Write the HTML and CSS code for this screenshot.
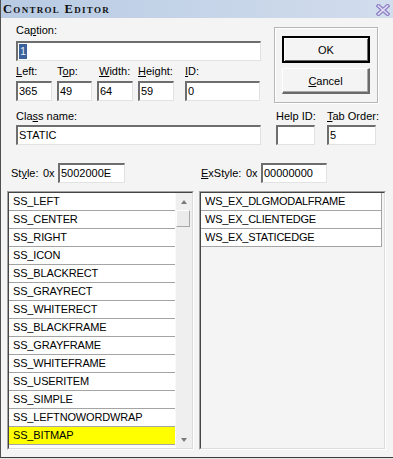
FILE: index.html
```html
<!DOCTYPE html>
<html>
<head>
<meta charset="utf-8">
<link rel="stylesheet" href="styles.css">
</head>
<body>
<div class="window">
  <div class="titlebar">
    <span class="title">Control Editor</span>
    <svg class="close" width="14" height="12" viewBox="0 0 14 12">
      <path d="M2.5 2 L11.5 10 M11.5 2 L2.5 10" stroke="#8d80c4" stroke-width="4" stroke-linecap="square"/>
      <path d="M2.5 2 L11.5 10 M11.5 2 L2.5 10" stroke="#e2dcf5" stroke-width="1.6" stroke-linecap="square"/>
    </svg>
  </div>

  <div class="top">
    <div class="leftcol">
      <div class="label">Ca<u>p</u>tion:</div>
      <div class="field caption"><span class="sel">1</span></div>
      <div class="fields">
        <div class="fld w-left"><div class="label"><u>L</u>eft:</div><div class="field">365</div></div>
        <div class="fld w-top"><div class="label">T<u>o</u>p:</div><div class="field">49</div></div>
        <div class="fld w-width"><div class="label lbl-shift"><u>W</u>idth:</div><div class="field">64</div></div>
        <div class="fld w-height"><div class="label"><u>H</u>eight:</div><div class="field">59</div></div>
        <div class="fld w-id"><div class="label"><u>I</u>D:</div><div class="field">0</div></div>
      </div>
    </div>
    <div class="group">
      <button class="btn default">OK</button>
      <button class="btn"><u>C</u>ancel</button>
    </div>
  </div>

  <div class="classrow">
    <div class="fld w-class"><div class="label">Cla<u>s</u>s name:</div><div class="field">STATIC</div></div>
    <div class="fld w-help"><div class="label">Help ID:</div><div class="field"></div></div>
    <div class="fld w-tab"><div class="label"><u>T</u>ab Order:</div><div class="field">5</div></div>
  </div>

  <div class="stylerow">
    <div class="stylegrp">
      <span class="slabel">St<u>y</u>le:</span><span class="ox">0x</span><div class="field w-style">5002000E</div>
    </div>
    <div class="stylegrp ex">
      <span class="slabel exlabel"><u>E</u>xStyle:</span><span class="ox">0x</span><div class="field w-exstyle">00000000</div>
    </div>
  </div>

  <div class="lists">
    <div class="listbox">
      <div class="listinner">
        <div class="items">
          <div class="row">SS_LEFT</div>
          <div class="row">SS_CENTER</div>
          <div class="row">SS_RIGHT</div>
          <div class="row">SS_ICON</div>
          <div class="row">SS_BLACKRECT</div>
          <div class="row">SS_GRAYRECT</div>
          <div class="row">SS_WHITERECT</div>
          <div class="row">SS_BLACKFRAME</div>
          <div class="row">SS_GRAYFRAME</div>
          <div class="row">SS_WHITEFRAME</div>
          <div class="row">SS_USERITEM</div>
          <div class="row">SS_SIMPLE</div>
          <div class="row">SS_LEFTNOWORDWRAP</div>
          <div class="row hl">SS_BITMAP</div>
          <div class="row">SS_OWNERDRAW</div>
        </div>
        <div class="scrollbar">
          <div class="sbtn"><span class="arrow up"></span></div>
          <div class="track"><div class="thumb"></div></div>
          <div class="sbtn"><span class="arrow down"></span></div>
        </div>
      </div>
    </div>
    <div class="listbox">
      <div class="listinner ex">
        <div class="items exitems">
          <div class="row">WS_EX_DLGMODALFRAME</div>
          <div class="row">WS_EX_CLIENTEDGE</div>
          <div class="row">WS_EX_STATICEDGE</div>
        </div>
      </div>
    </div>
  </div>
</div>
</body>
</html>
```

FILE: styles.css
```css
html, body {
  margin: 0;
  padding: 0;
  background: #e6e6e6;
}
body {
  width: 393px;
  height: 459px;
  overflow: hidden;
  font-family: "Liberation Sans", Arial, sans-serif;
  font-size: 11px;
  color: #000;
}
u { text-decoration: underline; text-underline-offset: 1px; }

.window {
  width: 393px;
  height: 458px;
  box-sizing: border-box;
  background: #f4f4f4;
  border-left: 1px solid #505050;
  border-bottom: 1px solid #3a3a3a;
  display: flex;
  flex-direction: column;
}

.titlebar {
  height: 18px;
  flex: none;
  display: flex;
  align-items: center;
  justify-content: space-between;
  background: linear-gradient(to right, #b8cbe3, #d2dded);
  padding: 0 2px 0 2px;
}
.title {
  font-family: "Liberation Serif", "Times New Roman", serif;
  font-weight: bold;
  font-variant: small-caps;
  font-size: 12.5px;
  letter-spacing: 1.3px;
  color: #111;
  padding-top: 1px;
}
.close { display: block; margin-right: 1px; margin-top: 1px; }

.label {
  height: 13px;
  line-height: 13px;
  white-space: nowrap;
}
.lbl-shift { padding-left: 2px; }

.field {
  height: 20px;
  box-sizing: border-box;
  background: #fff;
  border-style: solid;
  border-width: 2px 1px 1px 2px;
  border-color: #6e6e6e #e2e2e2 #e2e2e2 #6e6e6e;
  padding: 0 0 0 1px;
  line-height: 17px;
  white-space: nowrap;
  overflow: hidden;
}

.top {
  display: flex;
  padding-left: 15px;
  flex: none;
}
.leftcol {
  width: 245px;
  padding-top: 6px;
}
.caption { margin-top: 4px; }
.sel {
  background: #3a619c;
  color: #e8eef8;
  display: inline-block;
  line-height: 15px;
  padding: 0 1px;
}
.fields {
  display: flex;
  margin-top: 4px;
}
.fld .label { margin-bottom: 3px; }
.w-left { width: 36px; }
.w-top { width: 35px; margin-left: 5px; }
.w-width { width: 36px; margin-left: 5px; }
.w-height { width: 36px; margin-left: 5px; }
.w-id { width: 75px; margin-left: 11px; }

.group {
  margin-left: 13px;
  margin-top: 9px;
  width: 104px;
  height: 76px;
  box-sizing: border-box;
  border: 1px solid #b6b6b6;
  box-shadow: inset 1px 1px 0 #fff, 1px 1px 0 #fff;
  padding: 8px 0 0 7px;
  display: flex;
  flex-direction: column;
}
.btn {
  font-family: "Liberation Sans", Arial, sans-serif;
  font-size: 11px;
  color: #000;
  width: 88px;
  height: 26px;
  background: #f4f4f4;
  border-style: solid;
  border-width: 1px 2px 2px 1px;
  border-color: #ffffff #6a6a6a #6a6a6a #ffffff;
  box-shadow: inset -1px -1px 0 #a8a8a8;
  padding: 0;
  margin: 0;
}
.btn.default {
  height: 27px;
  border-width: 2px;
  border-color: #000;
  box-shadow: inset 1px 1px 0 #fff, inset -1px -1px 0 #6a6a6a;
  margin-bottom: 5px;
}

.classrow {
  display: flex;
  padding-left: 15px;
  margin-top: 7px;
  flex: none;
}
.classrow .label { margin-bottom: 2px; }
.w-class { width: 245px; }
.w-help { width: 39px; margin-left: 15px; }
.w-tab { width: 49px; margin-left: 12px; }

.stylerow {
  display: flex;
  padding-left: 10px;
  margin-top: 18px;
  flex: none;
}
.stylegrp {
  display: flex;
  align-items: center;
}
.stylegrp.ex { margin-left: 76px; }
.slabel { width: 32px; }
.exlabel { width: 45px; }
.ox { width: 15px; }
.w-style { width: 67px; }
.w-exstyle { width: 66px; }

.lists {
  display: flex;
  padding-left: 6px;
  margin-top: 8px;
  flex: none;
}
.listbox {
  width: 187px;
  height: 259px;
  box-sizing: border-box;
  border: 1px solid;
  border-color: #a3a3a3 #ffffff #ffffff #a3a3a3;
}
.listbox + .listbox { margin-left: 5px; }
.listinner {
  height: 100%;
  box-sizing: border-box;
  border: 1px solid;
  border-color: #454545 #dcdcdc #dcdcdc #454545;
  display: flex;
  overflow: hidden;
}
.items {
  flex: 1;
  overflow: hidden;
}
.row {
  height: 17px;
  line-height: 17px;
  border-bottom: 1px solid #a4a4a4;
  background: #fff;
  padding-left: 4px;
  letter-spacing: -0.15px;
  white-space: nowrap;
  overflow: hidden;
}
.row.hl { background: #ffff00; }
.exitems { flex: none; width: 181px; }
.exitems .row { border-right: 1px solid #a4a4a4; padding-left: 4px; letter-spacing: -0.25px; }

.scrollbar {
  width: 16px;
  flex: none;
  background: #efefef;
  border-left: 1px solid #fafafa;
  display: flex;
  flex-direction: column;
}
.sbtn {
  height: 17px;
  display: flex;
  align-items: center;
  justify-content: center;
  flex: none;
}
.track { flex: 1; }
.thumb {
  width: 14px;
  height: 17px;
  box-sizing: border-box;
  background: #ebebeb;
  border: 1px solid;
  border-color: #fdfdfd #a8a8a8 #a8a8a8 #fdfdfd;
}
.arrow {
  width: 0;
  height: 0;
  border-left: 3.5px solid transparent;
  border-right: 3.5px solid transparent;
}
.arrow.up { border-bottom: 4px solid #7a7a7a; }
.arrow.down { border-top: 4px solid #7a7a7a; }
```
